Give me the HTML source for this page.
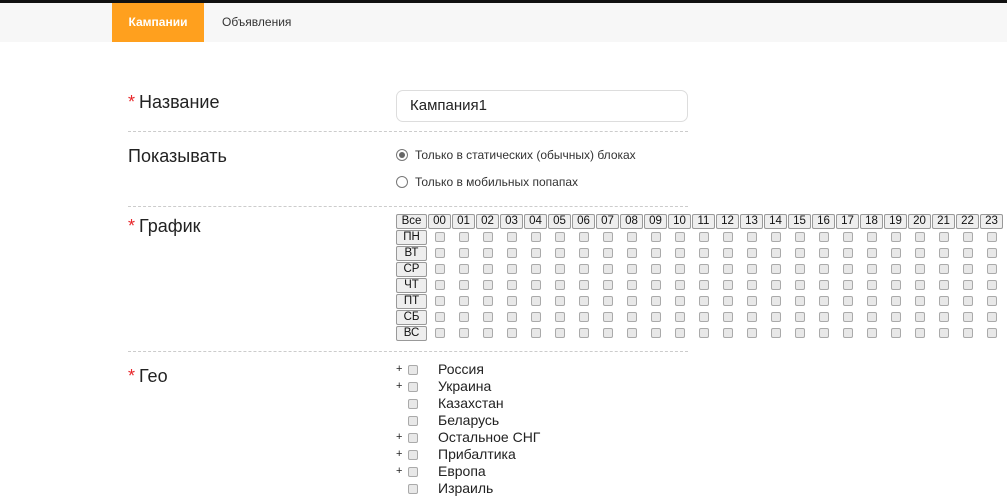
<!DOCTYPE html>
<html><head><meta charset="utf-8"><style>
*{box-sizing:border-box;margin:0;padding:0}
body{width:1007px;height:497px;overflow:hidden;background:#fff;font-family:"Liberation Sans","DejaVu Sans",sans-serif;color:#333;position:relative}
.top{position:absolute;left:0;top:0;width:1007px;height:3px;background:#111}
.nav{position:absolute;left:0;top:3px;width:1007px;height:39px;background:#f7f7f7}
.tab{position:absolute;top:3px;height:39px;font-size:12px;line-height:39px}
.t1{left:112px;width:92px;background:#ffa01e;color:#fff;text-align:center;font-weight:bold}
.t2{left:222px;color:#333}
.lbl{position:absolute;left:128px;font-size:18px;color:#222}
.lbl b{color:#e8262a;font-weight:normal;margin-right:4px}
.sep{position:absolute;left:128px;width:560px;border-top:1px dashed #ccc}
.inp{position:absolute;left:396px;top:90px;width:292px;height:32px;border:1px solid #ddd;border-radius:7px;font-size:15px;line-height:30px;padding-left:13px;color:#222}
.rad{position:absolute;left:396px;font-size:12px;color:#333}
.rad i{display:inline-block;width:12px;height:12px;border:1px solid #777;border-radius:50%;vertical-align:-2px;margin-right:7px;position:relative}
.rad i.on:after{content:"";position:absolute;left:2px;top:2px;width:6px;height:6px;border-radius:50%;background:#666}
.grid{position:absolute;left:396px;top:214px;font-size:11.5px}
.row{display:flex;height:16px;align-items:flex-start}
.hb{height:15px;border:1px solid #999;background:#eee;line-height:13px;text-align:center;color:#111;border-radius:2px}
.all{width:31px;margin-right:1px}
.h{width:23px;margin-right:1px}
.d{width:31px;margin-right:1px}
.c{width:24px;display:flex;justify-content:center;padding-top:2px}
.c i{display:block;width:10px;height:10px;border:1px solid #aaa;border-radius:2px;background:#e8e8e8}
.geo{position:absolute;left:396px;top:361px;font-size:14px;width:300px}
.g{height:17px;line-height:17px;position:relative;color:#222;white-space:nowrap}
.g .p{position:absolute;left:0;top:0;font-size:11px}
.g i{position:absolute;left:12px;top:4px;width:10px;height:10px;border:1px solid #aaa;border-radius:2px;background:#e8e8e8}
.g span{position:absolute;left:42px}
</style></head><body>
<div class="top"></div><div class="nav"></div>
<div class="tab t1">Кампании</div><div class="tab t2">Объявления</div>
<div class="lbl" style="top:92px"><b>*</b>Название</div>
<div class="inp">Кампания1</div>
<div class="sep" style="top:131px"></div>
<div class="lbl" style="top:146px">Показывать</div>
<div class="rad" style="top:148px"><i class="on"></i>Только в статических (обычных) блоках</div>
<div class="rad" style="top:175px"><i></i>Только в мобильных попапах</div>
<div class="sep" style="top:206px"></div>
<div class="lbl" style="top:216px"><b>*</b>График</div>
<div class="grid">
<div class="row"><div class="hb all">Все</div><div class="hb h">00</div><div class="hb h">01</div><div class="hb h">02</div><div class="hb h">03</div><div class="hb h">04</div><div class="hb h">05</div><div class="hb h">06</div><div class="hb h">07</div><div class="hb h">08</div><div class="hb h">09</div><div class="hb h">10</div><div class="hb h">11</div><div class="hb h">12</div><div class="hb h">13</div><div class="hb h">14</div><div class="hb h">15</div><div class="hb h">16</div><div class="hb h">17</div><div class="hb h">18</div><div class="hb h">19</div><div class="hb h">20</div><div class="hb h">21</div><div class="hb h">22</div><div class="hb h">23</div></div>
<div class="row"><div class="hb d">ПН</div><span class="c"><i></i></span><span class="c"><i></i></span><span class="c"><i></i></span><span class="c"><i></i></span><span class="c"><i></i></span><span class="c"><i></i></span><span class="c"><i></i></span><span class="c"><i></i></span><span class="c"><i></i></span><span class="c"><i></i></span><span class="c"><i></i></span><span class="c"><i></i></span><span class="c"><i></i></span><span class="c"><i></i></span><span class="c"><i></i></span><span class="c"><i></i></span><span class="c"><i></i></span><span class="c"><i></i></span><span class="c"><i></i></span><span class="c"><i></i></span><span class="c"><i></i></span><span class="c"><i></i></span><span class="c"><i></i></span><span class="c"><i></i></span></div>
<div class="row"><div class="hb d">ВТ</div><span class="c"><i></i></span><span class="c"><i></i></span><span class="c"><i></i></span><span class="c"><i></i></span><span class="c"><i></i></span><span class="c"><i></i></span><span class="c"><i></i></span><span class="c"><i></i></span><span class="c"><i></i></span><span class="c"><i></i></span><span class="c"><i></i></span><span class="c"><i></i></span><span class="c"><i></i></span><span class="c"><i></i></span><span class="c"><i></i></span><span class="c"><i></i></span><span class="c"><i></i></span><span class="c"><i></i></span><span class="c"><i></i></span><span class="c"><i></i></span><span class="c"><i></i></span><span class="c"><i></i></span><span class="c"><i></i></span><span class="c"><i></i></span></div>
<div class="row"><div class="hb d">СР</div><span class="c"><i></i></span><span class="c"><i></i></span><span class="c"><i></i></span><span class="c"><i></i></span><span class="c"><i></i></span><span class="c"><i></i></span><span class="c"><i></i></span><span class="c"><i></i></span><span class="c"><i></i></span><span class="c"><i></i></span><span class="c"><i></i></span><span class="c"><i></i></span><span class="c"><i></i></span><span class="c"><i></i></span><span class="c"><i></i></span><span class="c"><i></i></span><span class="c"><i></i></span><span class="c"><i></i></span><span class="c"><i></i></span><span class="c"><i></i></span><span class="c"><i></i></span><span class="c"><i></i></span><span class="c"><i></i></span><span class="c"><i></i></span></div>
<div class="row"><div class="hb d">ЧТ</div><span class="c"><i></i></span><span class="c"><i></i></span><span class="c"><i></i></span><span class="c"><i></i></span><span class="c"><i></i></span><span class="c"><i></i></span><span class="c"><i></i></span><span class="c"><i></i></span><span class="c"><i></i></span><span class="c"><i></i></span><span class="c"><i></i></span><span class="c"><i></i></span><span class="c"><i></i></span><span class="c"><i></i></span><span class="c"><i></i></span><span class="c"><i></i></span><span class="c"><i></i></span><span class="c"><i></i></span><span class="c"><i></i></span><span class="c"><i></i></span><span class="c"><i></i></span><span class="c"><i></i></span><span class="c"><i></i></span><span class="c"><i></i></span></div>
<div class="row"><div class="hb d">ПТ</div><span class="c"><i></i></span><span class="c"><i></i></span><span class="c"><i></i></span><span class="c"><i></i></span><span class="c"><i></i></span><span class="c"><i></i></span><span class="c"><i></i></span><span class="c"><i></i></span><span class="c"><i></i></span><span class="c"><i></i></span><span class="c"><i></i></span><span class="c"><i></i></span><span class="c"><i></i></span><span class="c"><i></i></span><span class="c"><i></i></span><span class="c"><i></i></span><span class="c"><i></i></span><span class="c"><i></i></span><span class="c"><i></i></span><span class="c"><i></i></span><span class="c"><i></i></span><span class="c"><i></i></span><span class="c"><i></i></span><span class="c"><i></i></span></div>
<div class="row"><div class="hb d">СБ</div><span class="c"><i></i></span><span class="c"><i></i></span><span class="c"><i></i></span><span class="c"><i></i></span><span class="c"><i></i></span><span class="c"><i></i></span><span class="c"><i></i></span><span class="c"><i></i></span><span class="c"><i></i></span><span class="c"><i></i></span><span class="c"><i></i></span><span class="c"><i></i></span><span class="c"><i></i></span><span class="c"><i></i></span><span class="c"><i></i></span><span class="c"><i></i></span><span class="c"><i></i></span><span class="c"><i></i></span><span class="c"><i></i></span><span class="c"><i></i></span><span class="c"><i></i></span><span class="c"><i></i></span><span class="c"><i></i></span><span class="c"><i></i></span></div>
<div class="row"><div class="hb d">ВС</div><span class="c"><i></i></span><span class="c"><i></i></span><span class="c"><i></i></span><span class="c"><i></i></span><span class="c"><i></i></span><span class="c"><i></i></span><span class="c"><i></i></span><span class="c"><i></i></span><span class="c"><i></i></span><span class="c"><i></i></span><span class="c"><i></i></span><span class="c"><i></i></span><span class="c"><i></i></span><span class="c"><i></i></span><span class="c"><i></i></span><span class="c"><i></i></span><span class="c"><i></i></span><span class="c"><i></i></span><span class="c"><i></i></span><span class="c"><i></i></span><span class="c"><i></i></span><span class="c"><i></i></span><span class="c"><i></i></span><span class="c"><i></i></span></div>
</div>
<div class="sep" style="top:351px"></div>
<div class="lbl" style="top:366px"><b>*</b>Гео</div>
<div class="geo">
<div class="g"><span class="p">+</span><i></i><span>Россия</span></div>
<div class="g"><span class="p">+</span><i></i><span>Украина</span></div>
<div class="g"><i></i><span>Казахстан</span></div>
<div class="g"><i></i><span>Беларусь</span></div>
<div class="g"><span class="p">+</span><i></i><span>Остальное СНГ</span></div>
<div class="g"><span class="p">+</span><i></i><span>Прибалтика</span></div>
<div class="g"><span class="p">+</span><i></i><span>Европа</span></div>
<div class="g"><i></i><span>Израиль</span></div>
</div>
</body></html>
